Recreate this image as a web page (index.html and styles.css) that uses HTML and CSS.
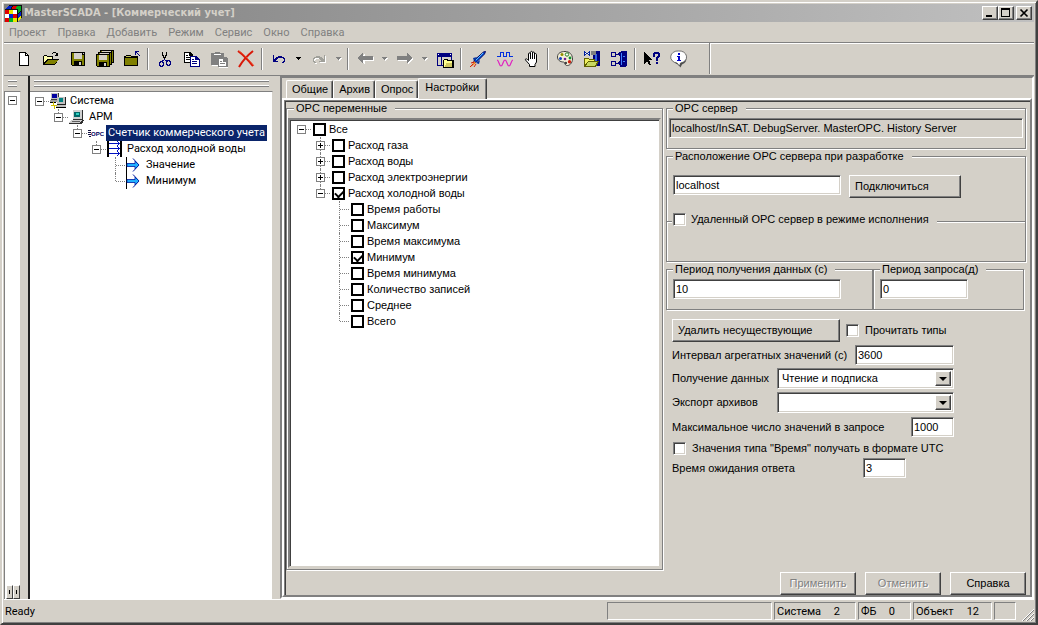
FILE: index.html
```
<!DOCTYPE html>
<html lang="ru">
<head>
  <meta charset="UTF-8">
  <meta name="viewport" content="width=device-width, initial-scale=1.0">
  <title>MasterSCADA - [Коммерческий учет]</title>
  <link rel="stylesheet" href="styles.css">
</head>
<body>
  <div class="window">

    <header class="titlebar">
      <svg class="app-icon" width="18" height="17" viewBox="0 0 18 17" shape-rendering="crispEdges">
        <path fill="#111" d="M1 4L5 0h13v12l-4 5H1z"/>
        <path fill="#fff" d="M9 5h4v4H9zM1 9h4v4H1z"/>
        <path fill="#e8e800" d="M5 5h4v4H5zM9 13h4v4H9z"/>
        <path fill="#e00000" d="M1 5h4v4H1zM9 9h4v4H9zM1 13h4v4H1zM9 1h4l-1 3H8z"/>
        <path fill="#0020d0" d="M5 9h4v4H5zM14 9l3-3v4l-3 3zM4 1h4L7 4H2z"/>
        <path fill="#00b020" d="M5 13h4v4H5zM14 5l3-4v4l-3 3zM13 1h4l-3 3h-2z"/>
        <path fill="#e8e800" d="M14 13l3-3v3l-3 3z"/>
      </svg>
      <span class="title">MasterSCADA - [Коммерческий учет]</span>
      <div class="win-buttons">
        <button type="button" aria-label="Свернуть"><svg width="12" height="10" viewBox="0 0 12 10" shape-rendering="crispEdges"><path d="M2 7h6v2H2z"/></svg></button>
        <button type="button" aria-label="Развернуть"><svg width="12" height="10" viewBox="0 0 12 10" shape-rendering="crispEdges"><path fill-rule="evenodd" d="M1 0h9v9H1zM2 2h7v6H2z"/></svg></button>
        <button type="button" class="close" aria-label="Закрыть"><svg width="12" height="10" viewBox="0 0 12 10"><path d="M2.500 1.500l7 7M9.500 1.500l-7 7" stroke="#000" stroke-width="1.700"/></svg></button>
      </div>
    </header>

    <nav class="menu">
      <a href="#">Проект</a>
      <a href="#">Правка</a>
      <a href="#">Добавить</a>
      <a href="#">Режим</a>
      <a href="#">Сервис</a>
      <a href="#">Окно</a>
      <a href="#">Справка</a>
    </nav>

    <div class="toolbar">
      <button type="button" class="tool" aria-label="Новый"><svg width="18" height="18" viewBox="0 0 18 18" shape-rendering="crispEdges"><path d="M4 2h7v1h1v1h1v1h1v11H4z"/><path fill="#fff" d="M5 3h5v3h3v9H5z"/><path fill="#fff" d="M11 4h1v1h-1z"/></svg></button>
      <button type="button" class="tool" aria-label="Открыть"><svg width="18" height="18" viewBox="0 0 18 18" shape-rendering="crispEdges"><path d="M1 6h1V5h3v1h6v3h6l-4 6H1z"/><path fill="#ffffb0" d="M2 6h3v1h5v2H5l-3 4z"/><path fill="#808000" d="M6 10h10l-3 4H3z"/><path fill="none" stroke="#000" d="M10 3.500h1M11 2.500h3M14 3.500h1M15.500 3v3M13 5.500h3M14 4.500h2"/></svg></button>
      <button type="button" class="tool" aria-label="Сохранить"><svg width="18" height="18" viewBox="0 0 18 18" shape-rendering="crispEdges"><path d="M2 2h14v14H3l-1-1z"/><path fill="#808000" d="M3 3h2v6h8V5h2v10h-2v-4H5v4H3z"/><path fill="#d4d0c8" d="M5 3h8v6H5zM14 3h1v1h-1zM10 12h2v3h-2z"/></svg></button>
      <button type="button" class="tool" aria-label="Сохранить все"><svg width="20" height="18" viewBox="0 0 20 18" shape-rendering="crispEdges"><path d="M5 0h14v13H5z"/><path fill="#808000" d="M6 1h1v2H6zM17 1h1v11h-1z"/><path fill="#d4d0c8" d="M7 1h9v1H7z"/><path d="M3 2h14v13H3z"/><path fill="#808000" d="M4 3h1v2H4zM15 3h1v11h-1z"/><path fill="#d4d0c8" d="M5 3h9v1H5z"/><path d="M1 4h14v13H2l-1-1z"/><path fill="#808000" d="M2 5h2v5h8V5h2v11h-2v-4H4v4H2z"/><path fill="#d4d0c8" d="M4 5h8v5H4zM9 13h2v3H9z"/></svg></button>
      <button type="button" class="tool" aria-label="На уровень вверх"><svg width="18" height="18" viewBox="0 0 18 18" shape-rendering="crispEdges"><path d="M2 6h1V5h5v1h7v10H1V6z"/><path fill="#808000" d="M2 8h12v7H2z"/><path fill="#c0c060" d="M3 6h5v1H3z"/><path fill="#000080" d="M12 1h4v1h-2v1h1v1h1v1h1v1h-1V5h-1V4h-1V3h-1v2h-1z"/></svg></button>
      <span class="sep"></span>
      <button type="button" class="tool" aria-label="Вырезать"><svg width="18" height="18" viewBox="0 0 18 18" shape-rendering="crispEdges"><path d="M6 2h1v3h1v2h1V5h1V2h1v4h-1v2H9v2H8V8H7V6H6z"/><path fill="none" stroke="#000080" d="M8.500 9.500l-3 2M8.500 9.500l3 2M4.500 11.500h2v1h1v3h-1v1h-2v-1h-1v-3h1zM11.500 10.500h2v1h1v3h-1v1h-2v-1h-1v-3h1z"/></svg></button>
      <button type="button" class="tool" aria-label="Копировать"><svg width="18" height="18" viewBox="0 0 18 18" shape-rendering="crispEdges"><path fill="#000" d="M1 2h6l3 3v8H1z"/><path fill="#fff" d="M2 3h4v3h3v6H2z"/><path stroke="#000" d="M3 5.500h2M3 7.500h5M3 9.500h5"/><path fill="#000080" d="M7 6h6l4 4v7H7z"/><path fill="#fff" d="M8 7h4v3h4v6H8z"/><path stroke="#000080" d="M9 9.500h2M9 11.500h5M9 13.500h5"/></svg></button>
      <button type="button" class="tool" aria-label="Вставить" disabled><svg width="18" height="18" viewBox="0 0 18 18" shape-rendering="crispEdges"><path fill="#fff" d="M2 4h12v5h4v9H9v-2H2z"/><path fill="#808080" d="M1 3h4V2h5v1h4v4h3l1 2v8H8v-2H1z"/><path fill="#fff" d="M4 4h7v1H4zM9 9h4v3h3v4H9z"/><path stroke="#808080" d="M10 11.500h2M10 13.500h5"/></svg></button>
      <button type="button" class="tool" aria-label="Удалить"><svg width="18" height="18" viewBox="0 0 18 18"><path fill="none" stroke="#d81808" stroke-width="2" d="M1 1c4 3 10 9 15 15M16 1C11 5 6 10 2 17"/><path fill="none" stroke="#f05030" d="M2 1c5 3 10 9 15 15"/></svg></button>
      <span class="sep"></span>
      <button type="button" class="tool" aria-label="Отменить действие"><svg width="18" height="18" viewBox="0 0 18 18" shape-rendering="crispEdges"><path fill="#000080" d="M3 5h1v4h1V8h1V7h2V6h4v1h2v1h1v4h-1v1h-2v-1h1v-1h1V9h-1V8H8v1H7v1H6v1h2v1H3z"/></svg></button>
      <button type="button" class="drop" aria-label="Список отмены"><svg width="5" height="3" viewBox="0 0 5 3" shape-rendering="crispEdges"><path d="M0 0h5v1H4v1H3v1H2V2H1V1H0z"/></svg></button>
      <button type="button" class="tool" aria-label="Повторить" disabled><svg width="18" height="18" viewBox="0 0 18 18" shape-rendering="crispEdges"><path fill="#fff" d="M16 6h-1v4h-1V9h-1V8h-2V7H7v1H5v1H4v4h1v1h2v-1H6v-1H5v-2h1V9h4v1h1v1h1v1h-2v1h6z"/><path fill="#a0a09a" d="M15 5h-1v4h-1V8h-1V7h-2V6H6v1H4v1H3v4h1v1h2v-1H5v-1H4V9h1V8h4v1h1v1h1v1H9v1h6z"/></svg></button>
      <button type="button" class="drop" aria-label="Список повтора" disabled><svg width="6" height="4" viewBox="0 0 6 4" shape-rendering="crispEdges"><path fill="#fff" d="M1 1h5L3.500 4z"/><path fill="#808080" d="M0 0h5v1H4v1H3v1H2V2H1V1H0z"/></svg></button>
      <span class="sep"></span>
      <button type="button" class="tool" aria-label="Назад" disabled><svg width="18" height="18" viewBox="0 0 18 18" shape-rendering="crispEdges"><path fill="#fff" d="M2 9l7-5v3h9v4H9v3z"/><path fill="#808080" d="M1 8l6-5v3h10v4H7v3z"/></svg></button>
      <button type="button" class="drop" aria-label="Список назад" disabled><svg width="6" height="4" viewBox="0 0 6 4" shape-rendering="crispEdges"><path fill="#fff" d="M1 1h5L3.500 4z"/><path fill="#808080" d="M0 0h5v1H4v1H3v1H2V2H1V1H0z"/></svg></button>
      <button type="button" class="tool" aria-label="Вперед" disabled><svg width="18" height="18" viewBox="0 0 18 18" shape-rendering="crispEdges"><path fill="#fff" d="M18 9l-6-5v3H2v4h10v3z"/><path fill="#808080" d="M17 8l-6-5v3H1v4h10v3z"/></svg></button>
      <button type="button" class="drop" aria-label="Список вперед" disabled><svg width="6" height="4" viewBox="0 0 6 4" shape-rendering="crispEdges"><path fill="#fff" d="M1 1h5L3.500 4z"/><path fill="#808080" d="M0 0h5v1H4v1H3v1H2V2H1V1H0z"/></svg></button>
      <button type="button" class="tool" aria-label="Палитра объектов"><svg width="18" height="18" viewBox="0 0 18 18" shape-rendering="crispEdges"><path fill="#000080" d="M1 3h15v13H1z"/><path fill="#fff" d="M2 4h1v1H2zM14 4h1v1h-1z"/><path fill="#d4d0c8" d="M2 7h3v8H2zM6 7h9v8H6z"/><path d="M8 9h4v1h5l1 1v7H7v-8z"/><path fill="#ffff90" d="M8 10h3v1h5v6H8z"/><path fill="#d0c860" d="M10 13h6v4H9z"/></svg></button>
      <span class="sep"></span>
      <button type="button" class="tool" aria-label="Запуск"><svg width="18" height="18" viewBox="0 0 18 18"><path fill="#0050d8" stroke="#000060" d="M16.500 1.500l-2 .5-9 8-1 3 3-1 8-8z"/><path stroke="#60c0ff" d="M14 3l-7 7"/><path fill="#0030a0" d="M4 8l4-1-3 4zM10 14l1-4-4 3z"/><path fill="#f08020" d="M5 11l2 2-5 4z"/><path stroke="#d02010" d="M5 12l-3 1M7 14l-2 3M4 14l-3 3"/></svg></button>
      <button type="button" class="tool" aria-label="Тренды"><svg width="18" height="18" viewBox="0 0 18 18"><path fill="none" stroke="#0030e0" shape-rendering="crispEdges" d="M1 6.500h3.500v-4h3v4h3v-4h3v4H17"/><path fill="none" stroke="#e020c0" stroke-width="1.200" d="M1 10c2 0 2 6 4 6s2-6 4-6 2 6 4 6 2-6 4-6"/></svg></button>
      <button type="button" class="tool" aria-label="Рука"><svg width="18" height="18" viewBox="0 0 18 18"><path fill="#fff" stroke="#000" d="M6.500 16.500v-2l-4-4.500c-.5-1.500 1-1.500 2-.5l1 1V4c0-1.500 2-1.500 2 0V2.500c0-1.500 2-1.500 2 0V3c0-1.300 2-1.300 2 0v1.500c0-1.200 2-1.200 2 0V12l-1.500 2.500v2z"/><path stroke="#000" d="M7.500 4v5M9.500 3v6M11.500 4v5"/></svg></button>
      <span class="sep"></span>
      <button type="button" class="tool" aria-label="Палитра"><svg width="18" height="18" viewBox="0 0 18 18"><path fill="#f4f0d8" stroke="#404040" d="M1.500 7C1.500 3 5 1.500 9 1.500S16.500 4 16.500 9c0 4-3 7-6 6.500-2-.5-1-3-3-3.500C4 12 1.500 10 1.500 7z"/><circle cx="6" cy="4.500" r="1.500" fill="#909000"/><circle cx="11" cy="4.500" r="1.700" fill="#fff" stroke="#208020"/><circle cx="4.500" cy="8.500" r="1.500" fill="#1040c0"/><circle cx="14" cy="8" r="1.400" fill="#109030"/><circle cx="13.500" cy="11.800" r="1.700" fill="#d02010"/><circle cx="9" cy="9" r="1.300" fill="#702090"/><circle cx="9.800" cy="13" r="1.300" fill="#404040"/></svg></button>
      <button type="button" class="tool" aria-label="Библиотека"><svg width="18" height="18" viewBox="0 0 18 18" shape-rendering="crispEdges"><path fill="#000080" d="M10 3l2-2h5v15h-7z"/><path fill="#3060e0" d="M12 4h2v8h-2z"/><path fill="#808080" d="M8 1h5v4H8z"/><path fill="#0020a0" d="M1 1l3 2 3-2v5L4 4 1 6z"/><path fill="#fff" d="M2 3h1v1H2zM5 3h1v1H5z"/><path fill="#606000" d="M1 8h5v1h6v2h4l-3 6H1z"/><path fill="#f0f060" d="M2 9h4v1h5v1H5l-3 4z"/><path fill="#c8d860" d="M5 12h9l-2 4H3z"/></svg></button>
      <button type="button" class="tool" aria-label="Соединения"><svg width="18" height="18" viewBox="0 0 18 18" shape-rendering="crispEdges"><path fill="#000080" d="M10 2l2-1h5v15l-2 1h-5z"/><path fill="#4080ff" d="M11 3h1v12h-1zM13 6h2v1h-2zM13 11h2v1h-2z"/><path fill="none" stroke="#000080" d="M1.500 2.500h4v4h-4zM1.500 11.500h4v4h-4zM6 4.500h4M6 13.500h4"/><path fill="#000080" d="M7 4l3-2v5zM7 13l3-2v5z"/></svg></button>
      <span class="sep"></span>
      <button type="button" class="tool" aria-label="Контекстная справка"><svg width="18" height="18" viewBox="0 0 18 18" shape-rendering="crispEdges"><path d="M1 2l8 8H6l2 5H6l-2-4-3 3z"/><path fill="#000080" d="M10 3h1V2h5v1h1v4h-1v1h-1v3h-2V7h1V6h1V4h-3v3h-2zM13 12h2v2h-2z"/></svg></button>
      <button type="button" class="tool" aria-label="О программе"><svg width="18" height="18" viewBox="0 0 18 18"><path fill="#505050" d="M9.500 2a7 6.500 0 0 1 2.500 12.500l-1.500 3-2.500-3A7 6.500 0 0 1 9.500 2z"/><path fill="#fff" stroke="#404040" stroke-width=".7" d="M8.500 1a7 6 0 0 1 2 12l-1 3-2.500-3A7 6 0 0 1 8.500 1z"/><path fill="#0000c8" shape-rendering="crispEdges" d="M8 3h2v2H8zM7 6h3v4h1v1H7v-1h1V7H7z"/></svg></button>
      <span class="sep last"></span>
    </div>

    <main class="workspace">
      <aside class="dock narrow">
        <div class="grip"></div>
        <div class="strip">
          <button type="button" class="toggle open" aria-label="Свернуть"></button>
          <div class="strip-buttons">
            <button type="button" aria-label="Влево"></button>
            <button type="button" aria-label="Вправо"></button>
          </div>
        </div>
      </aside>

      <aside class="dock objects">
        <div class="grip"></div>
        <div class="object-tree">
          <ul class="tree">
            <li>
              <div class="row">
                <span class="twig"><button type="button" class="toggle open" aria-label="Свернуть"></button></span>
                <svg class="node-icon" width="16" height="16" viewBox="0 0 16 16" shape-rendering="crispEdges"><path fill="#404040" d="M1 0h8v7H1z"/><path fill="#c0c0c0" d="M1 0h7v6H1z"/><path fill="#0000a0" d="M2 1h5v4H2z"/><path fill="#a0a0a0" d="M0 7h8v2H0z"/><path fill="#202020" d="M7 4h9v8H7z"/><path fill="#c0c0c0" d="M7 4h8v7H7z"/><path fill="#008080" d="M9 5h4v4H9z"/><path fill="#c0c0c0" d="M6 12h10v2H6z"/><path d="M6 14h10v1H6zM0 9h6v1H0z"/><path fill="#d0c000" d="M3 9h1v3h3v1H5v3H4v-3H1v-1h2z"/></svg>
                <span class="label">Система</span>
              </div>
              <ul>
                <li>
                  <div class="row">
                    <span class="twig"><button type="button" class="toggle open" aria-label="Свернуть"></button></span>
                    <svg class="node-icon" width="16" height="16" viewBox="0 0 16 16" shape-rendering="crispEdges"><path fill="#303030" d="M4 1h10v10H4z"/><path fill="#d0d0d0" d="M4 1h9v9H4z"/><path fill="#006868" d="M5 3h6v5H5z"/><path fill="#30d0c0" d="M7 4h3v2H7z"/><path fill="#303030" d="M2 11h13l-2 4H0z"/><path fill="#d0d0d0" d="M2 11h11l-2 3H0z"/><path stroke="#606060" d="M3 12.500h8"/></svg>
                    <span class="label">АРМ</span>
                  </div>
                  <ul>
                    <li>
                      <div class="row">
                        <span class="twig"><button type="button" class="toggle open" aria-label="Свернуть"></button></span>
                        <svg class="node-icon" width="16" height="16" viewBox="0 0 16 16"><path fill="none" stroke="#101040" shape-rendering="crispEdges" d="M0 5.500h3M0 7.500h3M0 9.500h3M1 11.500h2"/><text class="icon-text" x="3" y="11">OPC</text></svg>
                        <span class="label selected">Счетчик коммерческого учета</span>
                      </div>
                      <ul>
                        <li>
                          <div class="row">
                            <span class="twig"><button type="button" class="toggle open" aria-label="Свернуть"></button></span>
                            <svg class="node-icon" width="16" height="16" viewBox="0 0 16 16" shape-rendering="crispEdges"><path d="M0 0h2v16H0zM13 0h2v16h-2z"/><path fill="none" stroke="#0010c0" d="M2 2.500h11M2 7.500h11M2 12.500h11"/><path fill="#0010c0" d="M10 0h1v1h1v1h1v1h-1v1h-1v1h-1V4h1V1h-1zM10 5h1v1h1v1h1v1h-1v1h-1v1h-1V9h1V6h-1zM10 10h1v1h1v1h1v1h-1v1h-1v1h-1v-1h1v-3h-1z"/></svg>
                            <span class="label">Расход холодной воды</span>
                          </div>
                          <ul>
                            <li>
                              <div class="row">
                                <span class="twig"></span>
                                <svg class="node-icon" width="16" height="16" viewBox="0 0 16 16"><path shape-rendering="crispEdges" d="M0 0h1v16H0z"/><path fill="none" stroke="#0018a0" d="M7 1.500l6 6.500-6 6.500"/><path fill="#20b0ff" stroke="#0018a0" stroke-width=".8" d="M1 6.500h8V4l4 4-4 4V9.500H1z"/></svg>
                                <span class="label">Значение</span>
                              </div>
                            </li>
                            <li>
                              <div class="row">
                                <span class="twig"></span>
                                <svg class="node-icon" width="16" height="16" viewBox="0 0 16 16"><path shape-rendering="crispEdges" d="M0 0h1v16H0z"/><path fill="none" stroke="#0018a0" d="M7 1.500l6 6.500-6 6.500"/><path fill="#20b0ff" stroke="#0018a0" stroke-width=".8" d="M1 6.500h8V4l4 4-4 4V9.500H1z"/></svg>
                                <span class="label">Минимум</span>
                              </div>
                            </li>
                          </ul>
                        </li>
                      </ul>
                    </li>
                  </ul>
                </li>
              </ul>
            </li>
          </ul>
        </div>
      </aside>

      <section class="editor">
        <div class="tabs" role="tablist">
          <button type="button" role="tab">Общие</button>
          <button type="button" role="tab">Архив</button>
          <button type="button" role="tab">Опрос</button>
          <button type="button" role="tab" class="active" aria-selected="true">Настройки</button>
        </div>

        <form class="page">
          <div class="columns">
            <fieldset class="group variables">
              <legend>OPC переменные</legend>
              <div class="variable-tree">
                <ul class="tree">
                  <li>
                    <div class="row"><span class="twig"><button type="button" class="toggle open" aria-label="Свернуть"></button></span><input type="checkbox" id="v0"><label for="v0">Все</label></div>
                    <ul>
                      <li><div class="row"><span class="twig"><button type="button" class="toggle" aria-label="Развернуть"></button></span><input type="checkbox" id="v1"><label for="v1">Расход газа</label></div></li>
                      <li><div class="row"><span class="twig"><button type="button" class="toggle" aria-label="Развернуть"></button></span><input type="checkbox" id="v2"><label for="v2">Расход воды</label></div></li>
                      <li><div class="row"><span class="twig"><button type="button" class="toggle" aria-label="Развернуть"></button></span><input type="checkbox" id="v3"><label for="v3">Расход электроэнергии</label></div></li>
                      <li>
                        <div class="row"><span class="twig"><button type="button" class="toggle open" aria-label="Свернуть"></button></span><input type="checkbox" id="v4" checked><label for="v4">Расход холодной воды</label></div>
                        <ul>
                          <li><div class="row"><span class="twig"></span><input type="checkbox" id="v5"><label for="v5">Время работы</label></div></li>
                          <li><div class="row"><span class="twig"></span><input type="checkbox" id="v6"><label for="v6">Максимум</label></div></li>
                          <li><div class="row"><span class="twig"></span><input type="checkbox" id="v7"><label for="v7">Время максимума</label></div></li>
                          <li><div class="row"><span class="twig"></span><input type="checkbox" id="v8" checked><label for="v8">Минимум</label></div></li>
                          <li><div class="row"><span class="twig"></span><input type="checkbox" id="v9"><label for="v9">Время минимума</label></div></li>
                          <li><div class="row"><span class="twig"></span><input type="checkbox" id="v10"><label for="v10">Количество записей</label></div></li>
                          <li><div class="row"><span class="twig"></span><input type="checkbox" id="v11"><label for="v11">Среднее</label></div></li>
                          <li><div class="row"><span class="twig"></span><input type="checkbox" id="v12"><label for="v12">Всего</label></div></li>
                        </ul>
                      </li>
                    </ul>
                  </li>
                </ul>
              </div>
            </fieldset>

            <div class="settings">
              <fieldset class="group server">
                <legend>OPC сервер</legend>
                <input type="text" class="field" aria-label="OPC сервер" value="localhost/InSAT. DebugServer. MasterOPC. History Server" readonly>
              </fieldset>

              <fieldset class="group location">
                <legend>Расположение OPC сервера при разработке</legend>
                <input type="text" class="field wide" aria-label="Расположение OPC сервера" value="localhost">
                <button type="button" class="btn connect">Подключиться</button>
              </fieldset>

              <fieldset class="group remote">
                <legend><input type="checkbox" class="check" id="remote"><label for="remote">Удаленный OPC сервер в режиме исполнения</label></legend>
              </fieldset>

              <div class="periods">
                <fieldset class="group receive">
                  <legend>Период получения данных (с)</legend>
                  <input type="text" class="field wide" aria-label="Период получения данных" value="10">
                </fieldset>
                <fieldset class="group request">
                  <legend>Период запроса(д)</legend>
                  <input type="text" class="field medium" aria-label="Период запроса" value="0">
                </fieldset>
              </div>

              <div class="options">
                <div class="line delete">
                  <button type="button" class="btn remove">Удалить несуществующие</button>
                  <input type="checkbox" class="check" id="types"><label for="types">Прочитать типы</label>
                </div>
                <div class="line spread">
                  <label for="interval">Интервал агрегатных значений (с)</label>
                  <input type="text" class="field interval" id="interval" value="3600">
                </div>
                <div class="line spread">
                  <label for="receive">Получение данных</label>
                  <div class="combo"><select id="receive"><option>Чтение и подписка</option></select><span class="arrow"></span></div>
                </div>
                <div class="line spread">
                  <label for="export">Экспорт архивов</label>
                  <div class="combo"><select id="export"><option></option></select><span class="arrow"></span></div>
                </div>
                <div class="line spread max">
                  <label for="max">Максимальное число значений в запросе</label>
                  <input type="text" class="field small" id="max" value="1000">
                </div>
                <div class="line utc">
                  <input type="checkbox" class="check" id="utc"><label for="utc">Значения типа "Время" получать в формате UTC</label>
                </div>
                <div class="line wait">
                  <label for="wait">Время ожидания ответа</label>
                  <input type="text" class="field small" id="wait" value="3">
                </div>
              </div>
            </div>
          </div>

          <div class="actions">
            <button type="button" class="btn" disabled>Применить</button>
            <button type="button" class="btn" disabled>Отменить</button>
            <button type="button" class="btn">Справка</button>
          </div>
        </form>
      </section>
    </main>

    <footer class="status">
      <span class="ready">Ready</span>
      <span class="cell message"></span>
      <span class="cell system"><span>Система</span><span>2</span></span>
      <span class="cell blocks"><span>ФБ</span><span>0</span></span>
      <span class="cell object"><span>Объект</span><span>12</span></span>
      <span class="cell empty"></span>
      <svg class="resize" width="12" height="12" viewBox="0 0 12 12"><path stroke="#fff" d="M0 12L12 0M4 12l8-8M8 12l4-4"/><path stroke="#808080" d="M1 12L12 1M5 12l7-7M9 12l3-3"/></svg>
    </footer>
  </div>
</body>
</html>
```
FILE: styles.css
```
:root {
  --face: #d4d0c8;
  --shadow: #808080;
  --dark: #404040;
  --light: #fff;
  --ui: Roboto, Tahoma, sans-serif;
  --dialog: "Liberation Sans", Arial, sans-serif;
}

* {
  box-sizing: border-box;
}

body {
  margin: 0;
  background: var(--face);
  color: #000;
  font: 11px/13px var(--ui);
}

button, input, select {
  margin: 0;
  padding: 0;
  border: 0;
  border-radius: 0;
  background: none;
  color: inherit;
  font: inherit;
}

ul {
  list-style: none;
  margin: 0;
  padding: 0;
}

/* window frame */
.window {
  display: flex;
  flex-direction: column;
  min-height: 100vh;
  padding: 2px;
  border: 2px solid;
  border-color: var(--face) var(--dark) var(--dark) var(--face);
  box-shadow: inset 1px 1px var(--light), inset -1px -1px var(--shadow);
}

.titlebar {
  display: flex;
  align-items: center;
  height: 18px;
  padding-right: 2px;
  background: linear-gradient(to right, #808080, #c0c0c0);
  color: var(--face);
}

.title {
  flex: 1;
  padding-left: 2px;
  font: bold 11px/16px "DejaVu Sans Condensed", "DejaVu Sans", sans-serif;
}

.win-buttons {
  display: flex;
}

.win-buttons button {
  display: flex;
  width: 16px;
  height: 14px;
  padding: 1px;
  background: var(--face);
  border: 1px solid;
  border-color: var(--light) var(--dark) var(--dark) var(--light);
  box-shadow: inset -1px -1px var(--shadow);
}

.win-buttons .close {
  margin-left: 2px;
}

.menu {
  display: flex;
  gap: 11px;
  height: 21px;
  padding: 4px 5px;
  border-bottom: 1px solid var(--shadow);
}

.menu a {
  color: var(--shadow);
  text-decoration: none;
}

.toolbar {
  display: flex;
  align-items: center;
  height: 33px;
  padding: 0 0 2px 6px;
  border-top: 1px solid var(--light);
  border-bottom: 1px solid var(--shadow);
}

.tool, .drop {
  display: flex;
  align-items: center;
  justify-content: center;
  width: 27px;
  height: 24px;
}

.drop {
  width: 13px;
}

.sep {
  width: 2px;
  height: 22px;
  margin: 0 2px;
  border-left: 1px solid var(--shadow);
  border-right: 1px solid var(--light);
}

.sep.last {
  height: 31px;
  margin-left: 17px;
}

/* docked panels */
.workspace {
  display: flex;
  flex: 1;
}

.dock {
  display: flex;
  flex-direction: column;
  padding-top: 5px;
}

.narrow {
  width: 24px;
  padding-right: 7px;
}

.objects {
  width: 252px;
  padding-right: 7px;
  border-left: 2px solid #202020;
}

.grip {
  height: 6px;
  margin: 0 4px 4px;
  border: solid var(--shadow);
  border-width: 1px 0;
  box-shadow: 0 -1px var(--light), inset 0 -1px var(--light);
}

.strip, .object-tree {
  flex: 1;
  background: #fff;
  border: 1px solid var(--shadow);
  border-right-color: var(--face);
  border-bottom: 0;
}

.object-tree {
  padding-top: 1px;
  border-left: 0;
}

.strip {
  display: flex;
  flex-direction: column;
  align-items: center;
  justify-content: space-between;
  padding-top: 4px;
}

.strip-buttons {
  display: flex;
}

.strip-buttons button {
  width: 7px;
  height: 14px;
  background: radial-gradient(#000 1px, transparent 1px) var(--face);
  border: 1px solid;
  border-color: var(--light) var(--dark) var(--dark) var(--light);
}

/* trees */
.tree ul {
  padding-left: 19px;
}

.tree li {
  position: relative;
}

.tree ul li::before {
  content: "";
  position: absolute;
  top: 0;
  bottom: 0;
  left: 9px;
  border-left: 1px dotted var(--shadow);
}

.tree ul li:last-child::before {
  bottom: auto;
  height: 8px;
}

.row {
  display: flex;
  align-items: center;
  height: 16px;
}

.twig {
  display: flex;
  position: relative;
  align-items: center;
  justify-content: center;
  width: 19px;
  height: 16px;
  background: repeating-linear-gradient(to right, var(--shadow) 0 1px, transparent 1px 2px) 10px 8px / 9px 1px no-repeat;
}

.toggle {
  width: 9px;
  height: 9px;
  border: 1px solid var(--shadow);
  background:
    linear-gradient(#000, #000) center / 5px 1px no-repeat,
    linear-gradient(#000, #000) center / 1px 5px no-repeat,
    #fff;
}

.toggle.open {
  background: linear-gradient(#000, #000) center / 5px 1px no-repeat, #fff;
}

.node-icon {
  flex: none;
  margin: 0 2px 0 1px;
}

.icon-text {
  font: bold 6px "Liberation Sans", sans-serif;
  fill: #000060;
}

.label {
  padding: 1px 2px;
  line-height: 14px;
  white-space: nowrap;
}

.selected {
  background: #0a246a;
  color: #fff;
}

/* editor */
.editor {
  display: flex;
  flex: 1;
  flex-direction: column;
  border: 2px solid;
  border-color: var(--shadow) var(--light) var(--light) var(--shadow);
  font: 11px/13px var(--dialog);
}

.tabs {
  display: flex;
  align-items: flex-end;
  height: 20px;
  padding-left: 4px;
}

.tabs button {
  height: 18px;
  padding: 0 4px 0 5px;
  border: solid;
  border-width: 1px 1px 0;
  border-color: var(--light) var(--dark) var(--dark) var(--light);
  border-radius: 2px 2px 0 0;
  box-shadow: inset -1px 0 var(--shadow);
}

.tabs .active {
  position: relative;
  height: 21px;
  margin-bottom: -1px;
  padding: 0 7px 3px 6px;
  background: var(--face);
}

.page {
  display: flex;
  flex: 1;
  flex-direction: column;
  margin: 0;
  padding: 2px 4px 0 2px;
  border: 2px solid;
  border-color: var(--light) var(--shadow) var(--shadow) var(--light);
  box-shadow: inset 1px 1px var(--shadow), inset 2px 2px var(--dark);
}

.columns {
  display: flex;
  flex: 1;
}

.group {
  min-width: 0;
  margin: 0;
  padding: 0 2px;
  border: 1px solid var(--shadow);
  box-shadow: inset 1px 1px var(--light), 1px 1px var(--light);
}

.group legend {
  display: flex;
  margin-left: 6px;
  padding: 0 8px 0 2px;
  background: var(--face);
  line-height: 13px;
}

.variables {
  display: flex;
  flex: 1;
  flex-direction: column;
  padding: 3px 1px 1px;
}

.variable-tree {
  height: 100%;
  padding: 1px 0 0 2px;
  background: #fff;
  border: 2px solid;
  border-color: var(--shadow) var(--face) var(--face) var(--shadow);
  box-shadow: inset 1px 1px var(--dark);
}

.variable-tree input {
  appearance: none;
  width: 13px;
  height: 13px;
  margin: 0 3px 0 2px;
  border: 2px solid #000;
}

.check {
  appearance: none;
  flex: none;
  width: 13px;
  height: 13px;
  background: #fff;
  border: 1px solid;
  border-color: var(--shadow) var(--light) var(--light) var(--shadow);
  box-shadow: inset 1px 1px var(--dark), inset -1px -1px var(--face);
}

.variable-tree input:checked::before {
  content: "";
  display: block;
  width: 7px;
  height: 4px;
  margin: 1px;
  border: solid #000;
  border-width: 0 0 2px 2px;
  transform: rotate(-45deg);
}

.settings {
  display: flex;
  flex: none;
  flex-direction: column;
  width: 360px;
  margin-left: 3px;
}

.settings legend {
  margin-left: 4px;
}

.field {
  height: 20px;
  padding: 0 2px;
  background: #fff;
  border: 1px solid;
  border-color: var(--shadow) var(--light) var(--light) var(--shadow);
  box-shadow: inset 1px 1px var(--dark), inset -1px -1px var(--face);
}

.field:read-only {
  background: var(--face);
}

.wide {
  width: 168px;
}

.medium {
  width: 88px;
}

.small {
  width: 43px;
}

.interval {
  width: 99px;
}

.btn {
  height: 23px;
  padding: 0 5px;
  background: var(--face);
  border: 1px solid;
  border-color: var(--light) var(--dark) var(--dark) var(--light);
  box-shadow: inset -1px -1px var(--shadow);
  text-align: left;
}

.btn:disabled {
  color: var(--shadow);
  text-shadow: 1px 1px var(--light);
}

.server {
  padding: 3px 2px 10px;
}

.server .field {
  display: block;
  width: 100%;
}

.location {
  display: flex;
  gap: 8px;
  margin-top: 1px;
  padding: 12px 6px 23px;
}

.location legend, .periods legend {
  margin-left: 0;
}

.remote {
  margin-top: -9px;
  padding: 0 0 31px;
}

.connect {
  width: 112px;
}

.remote legend {
  gap: 5px;
  height: 17px;
  margin-left: 5px;
  padding-left: 1px;
}

.periods {
  display: flex;
  margin-top: 1px;
}

.periods .group {
  padding: 3px 6px 10px;
}

.receive {
  width: 207px;
}

.request {
  width: 151px;
}

.options {
  display: flex;
  flex-direction: column;
  gap: 3px;
  padding: 9px 0 0 6px;
}

.line {
  display: flex;
}

.spread {
  justify-content: space-between;
  align-items: center;
  width: 282px;
}

.delete {
  align-items: center;
  gap: 6px;
}

.remove {
  width: 168px;
}

.combo {
  display: flex;
  width: 177px;
  height: 21px;
  padding: 2px;
  background: #fff;
  border: 1px solid;
  border-color: var(--shadow) var(--light) var(--light) var(--shadow);
  box-shadow: inset 1px 1px var(--dark), inset -1px -1px var(--face);
}

.combo select {
  appearance: none;
  flex: 1;
  min-width: 0;
  padding-left: 2px;
}

.arrow {
  display: flex;
  align-items: center;
  justify-content: center;
  width: 16px;
  background: var(--face);
  border: 1px solid;
  border-color: var(--light) var(--dark) var(--dark) var(--light);
  box-shadow: inset -1px -1px var(--shadow);
}

.arrow::before {
  content: "";
  border: 4px solid transparent;
  border-top-color: #000;
  border-bottom: 0;
}

.max {
  margin-top: 1px;
}

.utc {
  gap: 6px;
  margin-top: 2px;
  padding-left: 1px;
}

.wait {
  align-items: center;
}

.wait label {
  width: 191px;
}

.actions {
  display: flex;
  justify-content: flex-end;
  gap: 9px;
  padding-top: 2px;
}

.actions .btn {
  width: 76px;
  padding: 0;
  text-align: center;
}

/* status bar */
.status {
  display: flex;
  align-items: center;
  gap: 2px;
  height: 22px;
  border-top: 1px solid var(--light);
}

.ready {
  flex: 1;
  padding: 2px 0 0 1px;
}

.cell {
  display: flex;
  justify-content: space-between;
  height: 18px;
  padding: 2px 15px 0 2px;
  border: 1px solid;
  border-color: var(--shadow) var(--light) var(--light) var(--shadow);
}

.message {
  width: 165px;
}

.system {
  width: 82px;
}

.blocks {
  width: 53px;
}

.object {
  width: 79px;
  padding-right: 12px;
}

.empty {
  width: 22px;
}

.resize {
  align-self: flex-end;
  margin-left: 4px;
}
```
